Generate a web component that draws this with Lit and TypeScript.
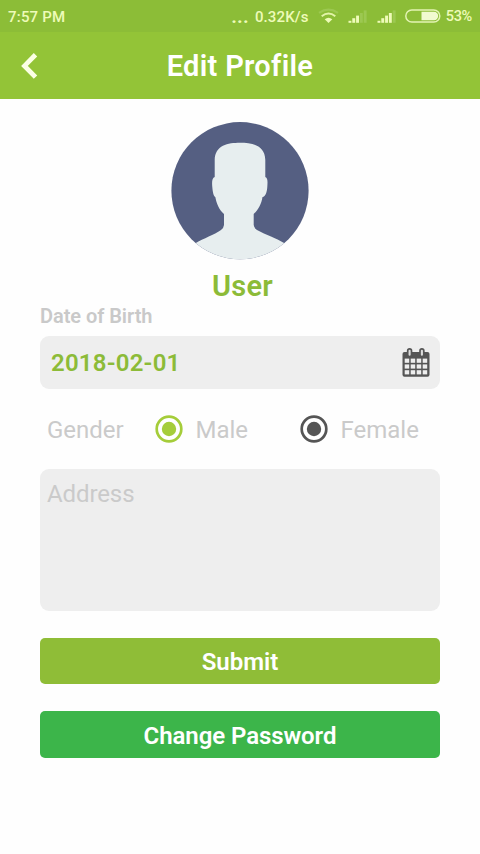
import { LitElement, html, css, svg } from "lit";
import { customElement, property } from "lit/decorators.js";

@customElement("status-bar")
class StatusBar extends LitElement {
  static styles = css`
    :host { display: flex; height: 32px; background: #8cbd37; color: #eefbb9; font-size: 15px; font-weight: 500; line-height: 34px; white-space: nowrap; padding: 0 8px; justify-content: space-between; }
    .time { letter-spacing: 0.2px; }
    .right { display: flex; }
    .dots { letter-spacing: 0.7px; font-weight: 900; font-size: 17px; }
    .speed { letter-spacing: 0.15px; margin-left: 2px; }
    svg { display: block; width: 132px; height: 32px; }
    .pct { font-size: 14.5px; letter-spacing: -0.3px; margin-left: 5px; }
  `;
  bars(x: number, lit: number) {
    return [0, 1, 2, 3, 4].map((i) => {
      const top = 20.8 - i * 2.6;
      return svg`<rect x=${x + i * 3.8} y=${top} width="2.9" height=${22.8 - top}
        fill=${i < lit ? "#eefbb9" : "#9cc851"} />`;
    });
  }
  render() {
    return html`
      <span class="time">7:57 PM</span>
      <div class="right">
        <span class="dots">...</span><span class="speed">&nbsp;0.32K/s</span>
        <svg viewBox="308 0 132 32" fill="none">
          <path d="M318 12.8Q327.500 6.500 337 12.800" stroke="#9cc851" stroke-width="2.200" />
          <path d="M320.700 16.200Q327.500 10.900 334.300 16.200" stroke="#e2f3a8" stroke-width="2" />
          <path d="M323.700 19.300Q327.500 16.200 331.300 19.300L327.500 23Z" fill="#eefbb9" />
          ${this.bars(347.500, 3)} ${this.bars(376.500, 4)}
          <rect x="404.800" y="10" width="34" height="12" rx="6" stroke="#e3f3b4" stroke-width="1.500" />
          <path d="M420.500 11.800H433a4.200 4.200 0 0 1 0 8.400H420.500Z" fill="#f1fad0" />
        </svg>
        <span class="pct">53%</span>
      </div>`;
  }
}

@customElement("radio-option")
class RadioOption extends LitElement {
  @property() label = "";
  @property() tone = "";
  static styles = css`
    :host { display: flex; align-items: center; gap: 13px; }
    svg { width: 28px; height: 28px; display: block; color: #555; }
    span { padding-top: 2px; }
    .green { color: #a5cd3a; }
  `;
  render() {
    return html`
      <svg class=${this.tone} viewBox="0 0 28 28">
        <circle cx="14" cy="14" r="12.3" fill="#fff" stroke="currentColor" stroke-width="2.700" />
        <circle cx="14" cy="14" r="7.200" fill="currentColor" />
      </svg>
      <span>${this.label}</span>`;
  }
}

@customElement("app-root")
class AppRoot extends LitElement {
  static styles = css`
    :host { display: flex; flex-direction: column; height: 854px; background: #fefefe; font-family: Roboto, "Liberation Sans", sans-serif; overflow: hidden; }
    header { display: grid; grid-template-columns: 60px 1fr 60px; align-items: center; height: 66.500px; background: #93c437; color: #fff; flex: none; }
    .back { display: block; width: 60px; height: 66px; }
    h1 { margin: 0; text-align: center; font-size: 29px; font-weight: 600; line-height: 66px; padding-top: 1px; font-variant-ligatures: none; letter-spacing: 0.3px; }
    main { display: flex; flex-direction: column; padding: 23px 40px 0; }
    .avatar { display: block; width: 138px; height: 138px; align-self: center; }
    .name { text-align: center; color: #8cbb38; font-size: 29px; font-weight: 600; line-height: 34px; margin: 9px 0 0 5px; letter-spacing: 0.2px; }
    .label { color: #c9c9c9; font-size: 20px; font-weight: 600; line-height: 24px; margin-top: 1px; letter-spacing: -0.05px; }
    .date { display: flex; align-items: center; justify-content: space-between; height: 53px; margin-top: 8px; background: #eee; border-radius: 9px; padding: 0 9px 0 11px; color: #8cbb38; font-size: 24px; font-weight: 600; }
    .date span { padding-top: 2px; letter-spacing: 0.22px; }
    .date svg { width: 30px; height: 32px; display: block; }
    .gender { display: grid; grid-template-columns: 107.500px 145px 1fr; align-items: center; height: 80px; padding-left: 7px; color: #cacaca; font-size: 24px; line-height: 28px; }
    .gender > span { padding-top: 2px; }
    .address { height: 142px; box-sizing: border-box; background: #eee; border-radius: 9px; padding: 11px 7px; color: #cacaca; font-size: 24px; line-height: 28px; letter-spacing: -0.1px; }
    .button { height: 46.500px; border-radius: 5px; color: #fff; text-align: center; font-size: 24px; font-weight: 600; line-height: 49px; background: #8fbd37; margin-top: 27px; }
    .password { background: #3cb54a; letter-spacing: -0.08px; line-height: 50px; }
  `;
  render() {
    return html`
      <status-bar></status-bar>
      <header>
        <svg class="back" viewBox="0 0 60 66" fill="none">
          <path d="M35.500 21.800L24.500 32.900L35.500 44.200" stroke="#fbffe4" stroke-width="4.800" />
        </svg>
        <h1>Edit Profile</h1>
      </header>
      <main>
        <svg class="avatar" viewBox="171 122 138 138">
          <defs><clipPath id="disc"><circle cx="240" cy="190.700" r="68.600" /></clipPath></defs>
          <g clip-path="url(#disc)">
            <rect x="171" y="121" width="138" height="139" fill="#555f82" />
            <path fill="#e7eeef" d="M240 142.700C252 142.700 265 145 265.300 160V177C268 178 267.600 182 267.300 187C267 192 265.500 196.500 262.500 197C261.500 204 258 210 253.700 214V225Q254 228 257 230C266 235 276 238 285 243.500V260H195V243.500C204 238 214 235 221 230Q223.700 228 224 225V214C219 210 216.500 203 215.300 197C213.500 196 212.700 192 212.300 187C211.800 182 212 178 214.700 177V160C215 145 228 142.700 240 142.700Z" />
          </g>
        </svg>
        <div class="name">User</div>
        <div class="label">Date of Birth</div>
        <div class="date">
          <span>2018-02-01</span>
          <svg viewBox="401 346 30 32">
            <rect x="402.500" y="352" width="27" height="24.800" rx="2" fill="#555" />
            ${[0, 1, 2, 3].map((c) => [0, 1, 2].map((r) => svg`
              <rect x=${404.700 + c * 6} y=${358.600 + r * 5.800} width="4.500" height="4.200" fill="#eee" />`))}
            <rect x="407.700" y="348.800" width="3.800" height="7.800" rx="1.900" fill="#ddd" stroke="#555" stroke-width="1.700" />
            <rect x="420" y="348.800" width="3.800" height="7.800" rx="1.900" fill="#ddd" stroke="#555" stroke-width="1.700" />
          </svg>
        </div>
        <div class="gender">
          <span>Gender</span>
          <radio-option label="Male" tone="green"></radio-option>
          <radio-option label="Female"></radio-option>
        </div>
        <div class="address">Address</div>
        <div class="button">Submit</div>
        <div class="button password">Change Password</div>
      </main>`;
  }
}
